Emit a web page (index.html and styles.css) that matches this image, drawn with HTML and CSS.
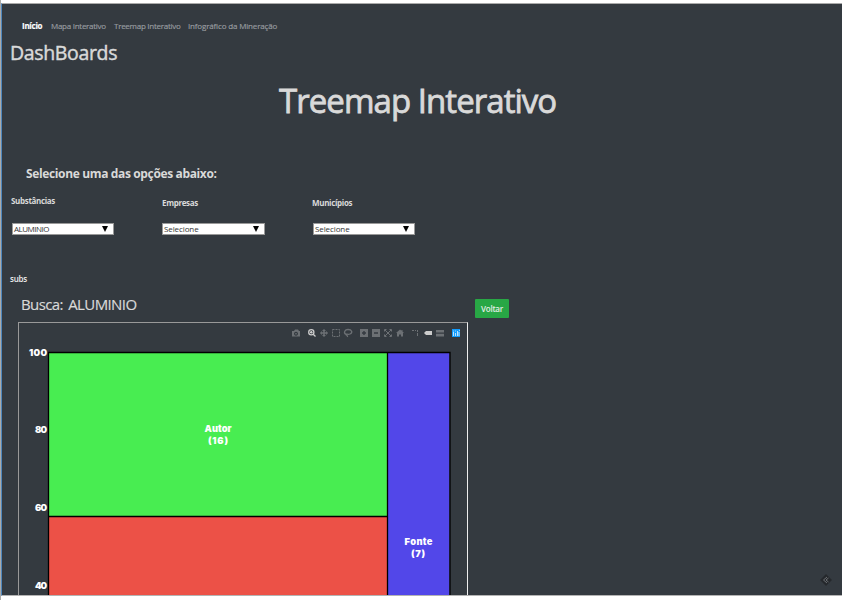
FILE: index.html
```html
<!DOCTYPE html>
<html lang="pt-BR">
<head>
<meta charset="utf-8">
<title>Treemap Interativo</title>
<link rel="stylesheet" href="styles.css">
</head>
<body>
<div class="app">
  <nav class="nav">
    <a class="active">Início</a><a class="n2">Mapa Interativo</a><a class="n3">Treemap Interativo</a><a class="n4">Infográfico da Mineração</a>
  </nav>
  <div class="brand">DashBoards</div>
  <h1 class="heading">Treemap Interativo</h1>
  <h2 class="prompt">Selecione uma das opções abaixo:</h2>
  <div class="filters">
    <div class="filter first"><label>Substâncias</label><div class="select"><span class="caps">ALUMINIO</span><i></i></div></div>
    <div class="filter"><label>Empresas</label><div class="select"><span>Selecione</span><i></i></div></div>
    <div class="filter"><label>Municípios</label><div class="select"><span>Selecione</span><i></i></div></div>
  </div>
  <div class="subs">subs</div>
  <div class="result">
    <div class="left">
      <div class="search">Busca: ALUMINIO</div>
      <div class="chart">
        <svg width="448" height="272" viewBox="19 323 448 272">
          <g class="icons">
            <path fill-rule="evenodd" d="M292 331h2l1-1.500h3l1 1.500h1v5.500h-8zM296 331.700a2 2 0 1 0 .01 0zM296 332.900a.8.8 0 1 1-.01 0z"/>
            <g class="lit"><circle class="line thick" cx="311.300" cy="332.300" r="2.600"/><path class="line thick" d="M313.200 334.200l2.300 2.300M310 332.300h2.600M311.300 331v2.600"/></g>
            <path d="M324 329l2 2h-1.200v1.300h1.300v-1.300l2 2-2 2v-1.300h-1.300v1.400h1.200l-2 2-2-2h1.200v-1.400h-1.300v1.300l-2-2 2-2v1.300h1.300V331H322z"/>
            <rect class="line" x="332.500" y="329.500" width="7" height="7" stroke-dasharray="2 1"/>
            <path class="line thick" d="M346 334.500c-3-2-1-5 2-5 4 0 5 3 2 4.500-2 1-4-.5-4 .5 0 1 2 .5 1.500 2.500"/>
            <path fill-rule="evenodd" d="M360 329h8v8h-8zM363.300 331v1.300H362v1.400h1.300v1.300h1.400v-1.300h1.300v-1.400h-1.300V331z"/>
            <path fill-rule="evenodd" d="M372 329h8v8h-8zM374 332.300v1.400h4v-1.400z"/>
            <path class="line" d="M384.500 331.500v-2h2M389.500 329.500h2v2M391.500 334.500v2h-2M386.500 336.500h-2v-2M385 330l6 6M391 330l-6 6"/>
            <path d="M396 333l4-3.500 1.500 1.200V330h1v1.500L404 333h-1v3.500h-2v-2h-2v2h-2V333z"/>
            <path class="line" d="M412 330.500h2M415 330.500h1M417.500 330v2M417.500 333v3"/>
            <path class="lit" d="M424 333l2-2h6v4h-6z"/>
            <path d="M436 330h8v2.600h-8zM436 333.800h8v2.600h-8z"/>
            <path fill="#119dff" d="M452 329h8v8h-8z"/>
            <path class="logo" d="M453.500 332v4M455.500 333v3M457.500 331v5M459 332v4M453 331h.8M455 331h.8M459 330.500h.8"/>
          </g>
          <rect x="48.500" y="352.500" width="339" height="164" fill="#48ed51"/>
          <rect x="48.500" y="516.500" width="339" height="90" fill="#ec5147"/>
          <rect x="387.500" y="352.500" width="62" height="250" fill="#5247e9"/>
          <path class="grid" d="M48.500 600V352.500H450V600M387.500 352V600M48 516.500H388"/>
          <g class="plot">
            <text x="29" y="356" textLength="18">100</text>
            <text x="35" y="433" textLength="12">80</text>
            <text x="35" y="511" textLength="12">60</text>
            <text x="35" y="589" textLength="12">40</text>
            <text x="204.500" y="432" textLength="27">Autor</text>
            <text x="208" y="444" textLength="20">(16)</text>
            <text x="404.500" y="545" textLength="28">Fonte</text>
            <text x="411" y="557" textLength="14">(7)</text>
          </g>
        </svg>
      </div>
    </div>
    <button class="back">Voltar</button>
  </div>
  <div class="debug"><svg width="12" height="12" viewBox="0 0 12 12"><path fill="#25282c" d="M6 0l6 6-6 6-6-6z"/><path class="line" d="M7 3L3.500 6 7 9M8.500 4L6 6l2.500 2"/></svg></div>
</div>
</body>
</html>
```
FILE: styles.css
```css
* { box-sizing: border-box; }
html { background: #fff; overflow: hidden; }
body { margin: 0; width: 843px; height: 600px; padding: 3px 1px 0 0; border-left: 1px solid #aaa; font-family: "Open Sans", "Noto Sans", sans-serif; color: #d9d9d9; overflow: hidden; }
.app { position: relative; height: 593px; background: #343a40; border-top: 1px solid #aaa; border-bottom: 1px solid #b4b4b4; border-left: 1px solid #4f87bd; overflow: hidden; }
.nav { display: flex; gap: 8px; margin: 15px 0 0 20px; height: 14px; font-size: 8px; line-height: 14px; letter-spacing: -.27px; color: #999da0; white-space: nowrap; -webkit-text-stroke: .15px; }
.nav .active { color: #fff; font-weight: 700; width: 21px; }
.n2 { width: 55px; }
.n3 { width: 66px; }
.n4 { letter-spacing: -.16px; }
.brand { margin: 6px 0 0 8px; height: 28px; line-height: 28px; font-size: 19.500px; letter-spacing: -.35px; -webkit-text-stroke: .45px; }
.heading { margin: 12px 0 0 277px; height: 44px; line-height: 44px; font-size: 33px; font-weight: 400; letter-spacing: -.95px; white-space: nowrap; -webkit-text-stroke: .8px; }
.prompt { margin: 41px 0 0 24px; height: 20px; line-height: 20px; font-size: 12px; font-weight: 700; letter-spacing: -.36px; }
.filters { display: grid; grid-template-columns: 151px 150px 151px; margin: 11px 0 0 9px; height: 44px; }
.filter { padding-top: 2px; }
.filter.first { padding-top: 0; }
.filter label { display: block; height: 12px; line-height: 12px; font-size: 8px; font-weight: 700; letter-spacing: -.33px; }
.select { display: flex; align-items: center; justify-content: space-between; width: 103px; height: 12px; margin: 14px 0 0 0; padding: 0 5px 0 1px; border: 1px solid #999; background: #fff; color: #333; font-size: 8px; line-height: 10px; letter-spacing: -.1px; }
.filter:last-child .select { margin-left: 1px; width: 102px; }
.first .select { margin-top: 16px; margin-left: 1px; width: 102px; }
.caps { letter-spacing: -.5px; }
.select i { border: 3.500px solid transparent; border-top: 6px solid #000; border-bottom: 0; }
.subs { margin: 34px 0 0 8px; height: 12px; line-height: 12px; font-size: 8px; font-weight: 600; letter-spacing: -.25px; color: #eee; }
.result { display: flex; align-items: flex-start; }
.left { width: 466px; padding-left: 16px; }
.search { margin: 7px 0 0 3px; height: 24px; line-height: 24px; font-size: 15px; letter-spacing: -.6px; word-spacing: 2px; -webkit-text-stroke: .15px; }
.chart { width: 450px; height: 274px; margin-top: 6px; border: 1px solid #999; border-right-color: #eee; border-bottom: 0; }
.chart svg { display: block; }
.back { margin: 14px 0 0 7px; width: 34px; height: 19px; padding: 0; border: 0; border-radius: 1px; background: #28a745; color: #e4eee6; font: 600 8px/19px "Open Sans", sans-serif; letter-spacing: -.25px; }
.icons { fill: #6c7074; }
.line { fill: none; stroke: #6c7074; stroke-width: 1; }
.thick { stroke-width: 1.300; }
.lit { fill: #ccc; }
.lit .line { stroke: #ccc; }
.logo { fill: none; stroke: #cdeaff; stroke-width: .9; }
.grid { fill: none; stroke: #000; stroke-width: 1.300; }
.plot { fill: #fff; font: 900 9.300px Inter, "Open Sans", sans-serif; }
.debug { position: absolute; right: 10px; bottom: 9px; width: 12px; height: 12px; }
.debug svg { display: block; }
```
